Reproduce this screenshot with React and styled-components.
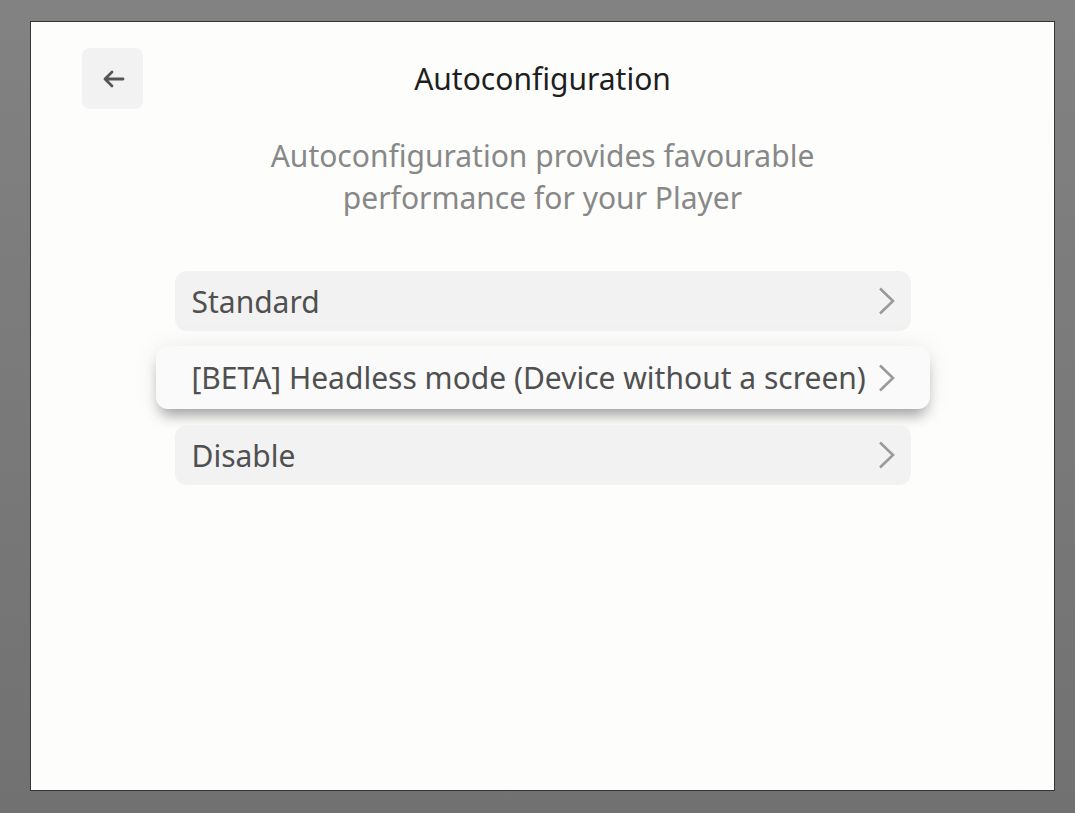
import React from "react";
import styled, { createGlobalStyle } from "styled-components";

const GlobalStyle = createGlobalStyle`
  html, body {
    margin: 0;
    padding: 0;
    height: 100%;
  }
  body {
    background: linear-gradient(#828282, #717171);
    font-family: "Noto Sans", "Open Sans", sans-serif;
  }
  #root {
    height: 100%;
  }
`;

const Screen = styled.div`
  box-sizing: border-box;
  height: 813px;
  padding: 21px 20px 22px 30px;
  display: flex;
`;

const Panel = styled.div`
  flex: 1;
  box-sizing: border-box;
  border: 1px solid #353535;
  background: #fdfdfc;
  display: flex;
  flex-direction: column;
  align-items: center;
  padding: 26px 0 0;
`;

const Header = styled.div`
  width: 100%;
  box-sizing: border-box;
  padding: 0 51px;
  display: grid;
  grid-template-columns: 61px 1fr 61px;
  align-items: center;
`;

const BackButton = styled.button`
  width: 61px;
  height: 61px;
  border: none;
  border-radius: 8px;
  background: #f2f2f2;
  display: flex;
  align-items: center;
  justify-content: center;
  padding: 0;
  color: #555;
`;

const Title = styled.h1`
  margin: 0;
  text-align: center;
  font-size: 30px;
  font-weight: 400;
  color: #1e1e1e;
`;

const Subtitle = styled.p`
  margin: 26px 0 0;
  width: 640px;
  text-align: center;
  font-size: 30px;
  line-height: 42px;
  color: #888;
`;

const Options = styled.ul`
  list-style: none;
  margin: 52px 0 0;
  padding: 0;
  width: 736px;
  display: flex;
  flex-direction: column;
  gap: 16px;
`;

const Option = styled.li`
  box-sizing: border-box;
  height: ${({ focused }) => (focused ? "63px" : "60px")};
  margin: ${({ focused }) => (focused ? "-1px -19px 0" : "0")};
  padding: ${({ focused }) => (focused ? "0 34px 0 36px" : "0 15px 0 17px")};
  border-radius: 12px;
  background: ${({ focused }) => (focused ? "#fafafa" : "#f2f2f2")};
  box-shadow: ${({ focused }) =>
    focused
      ? "0 10px 14px -4px rgba(0,0,0,0.35), 0 0 26px rgba(0,0,0,0.07)"
      : "none"};
  position: relative;
  display: flex;
  align-items: center;
  justify-content: space-between;
  font-size: 30px;
  color: #505050;
  white-space: nowrap;
`;

const Label = styled.span`
  flex: 1;
`;

const Chevron = () => (
  <svg width="19" height="30" viewBox="0 0 19 30" fill="none">
    <path
      d="M3 2.5 L16 15 L3 27.5"
      stroke="#9a9a9a"
      strokeWidth="2.6"
      strokeLinecap="butt"
      strokeLinejoin="miter"
    />
  </svg>
);

const ArrowLeft = () => (
  <svg width="24" height="20" viewBox="0 0 24 20" fill="none">
    <path
      d="M22 10 H4 M11 3 L4 10 L11 17"
      stroke="#555"
      strokeWidth="2.8"
      strokeLinecap="round"
      strokeLinejoin="round"
    />
  </svg>
);

const options = [
  { key: "standard", label: "Standard" },
  { key: "headless", label: "[BETA] Headless mode (Device without a screen)", focused: true },
  { key: "disable", label: "Disable" }
];

export default function App() {
  return (
    <>
      <GlobalStyle />
      <Screen>
        <Panel>
          <Header>
            <BackButton aria-label="Back">
              <ArrowLeft />
            </BackButton>
            <Title>Autoconfiguration</Title>
            <div />
          </Header>
          <Subtitle>
            Autoconfiguration provides favourable performance for your Player
          </Subtitle>
          <Options>
            {options.map(option => (
              <Option key={option.key} focused={option.focused}>
                <Label>{option.label}</Label>
                <Chevron />
              </Option>
            ))}
          </Options>
        </Panel>
      </Screen>
    </>
  );
}
